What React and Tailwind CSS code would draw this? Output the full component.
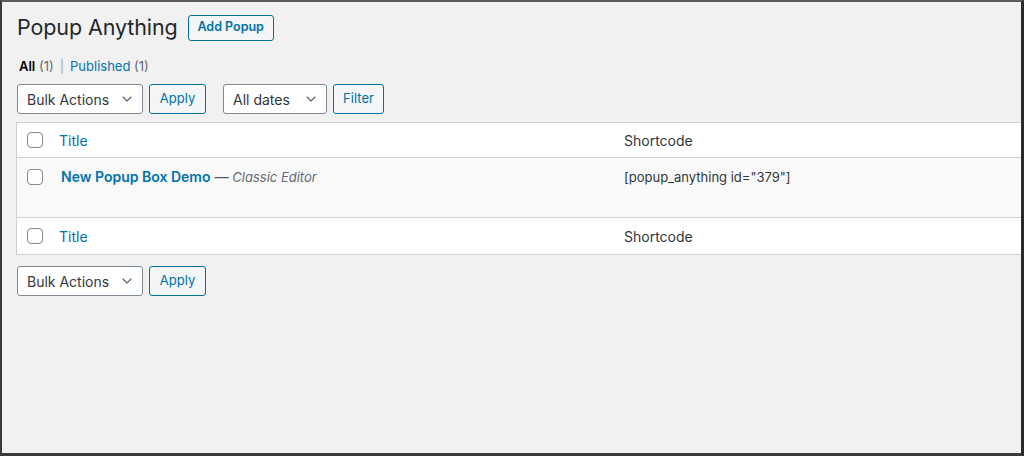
import { ChevronDown } from "lucide-react";

const font = { fontFamily: "Inter, 'Noto Sans', sans-serif" };

function Select({ label, width }) {
  return (
    <div
      className={`flex items-center justify-between h-[30px] ${width} rounded-[3px] border border-[#7e8993] bg-white pl-[9px] pr-[7px] text-[14px] text-[#32373c]`}
    >
      <span>{label}</span>
      <ChevronDown size={16} strokeWidth={1.6} className="text-[#555d66]" />
    </div>
  );
}

function Button({ children, width }) {
  return (
    <button
      className={`h-[30px] ${width} rounded-[3px] border border-[#0071a1] bg-[#f3f5f6] text-[13px] text-[#0071a1]`}
    >
      {children}
    </button>
  );
}

function Checkbox() {
  return <div className="w-4 h-4 rounded-[4px] border border-[#7e8993] bg-white" />;
}

export default function App() {
  return (
    <div
      style={font}
      className="w-[1024px] h-[456px] overflow-hidden bg-[#f1f1f1] border-t-2 border-l-2 border-r-[3px] border-b-[3px] border-t-[#5a5a5a] border-l-[#3a3a3a] border-r-[#2a2a2a] border-b-[#3a3a3a]"
    >
      <div className="pl-[14px] pt-[11px]">
        <div className="flex items-center gap-[10px]">
          <h1 className="text-[21.5px] leading-[29px] tracking-[-0.1px] text-[#23282d] pl-[1px]">Popup Anything</h1>
          <button className="h-[26px] w-[86px] rounded-[3px] border border-[#0071a1] bg-[#f3f5f6] text-[12.5px] font-semibold text-[#0071a1]">
            Add Popup
          </button>
        </div>

        <div className="mt-[15px] pl-[3px] text-[13px] leading-[18px] text-[#646970]">
          <span className="font-semibold text-black">All</span> <span>(1)</span>
          <span className="mx-[6px] text-[#a0a5aa]">|</span>
          <span className="text-[#0073aa]">Published</span> <span>(1)</span>
        </div>

        <div className="mt-[9px] flex items-center pl-[1px]">
          <Select label="Bulk Actions" width="w-[126px]" />
          <div className="ml-[6px]">
            <Button width="w-[57px]">Apply</Button>
          </div>
          <div className="ml-[17px]">
            <Select label="All dates" width="w-[104px]" />
          </div>
          <div className="ml-[6px]">
            <Button width="w-[51px]">Filter</Button>
          </div>
        </div>

        <div className="mt-[8px] w-[1010px] border border-[#ccd0d4] bg-white text-[14px]">
          <div className="flex items-center h-[35px] border-b border-[#ccd0d4]">
            <div className="w-[42px] pl-[10px]">
              <Checkbox />
            </div>
            <div className="w-[565px] text-[#0073aa]">Title</div>
            <div className="text-[#32373c]">Shortcode</div>
          </div>
          <div className="flex items-start h-[60px] bg-[#f9f9f9] border-b border-[#ccd0d4] pt-[11px]">
            <div className="w-[42px] pl-[10px]">
              <Checkbox />
            </div>
            <div className="w-[565px] pl-[2px] text-[14px] leading-[16px]">
              <span className="font-semibold text-[#0073aa]">New Popup Box Demo</span>
              <span className="text-[#50575e]"> — </span>
              <span className="italic text-[13px] text-[#646970]">Classic Editor</span>
            </div>
            <div className="text-[13px] leading-[16px] text-[#32373c]">[popup_anything id="379"]</div>
          </div>
          <div className="flex items-center h-[36px]">
            <div className="w-[42px] pl-[10px]">
              <Checkbox />
            </div>
            <div className="w-[565px] text-[#0073aa]">Title</div>
            <div className="text-[#32373c]">Shortcode</div>
          </div>
        </div>

        <div className="mt-[11px] flex items-center pl-[1px]">
          <Select label="Bulk Actions" width="w-[126px]" />
          <div className="ml-[6px]">
            <Button width="w-[57px]">Apply</Button>
          </div>
        </div>
      </div>
    </div>
  );
}
